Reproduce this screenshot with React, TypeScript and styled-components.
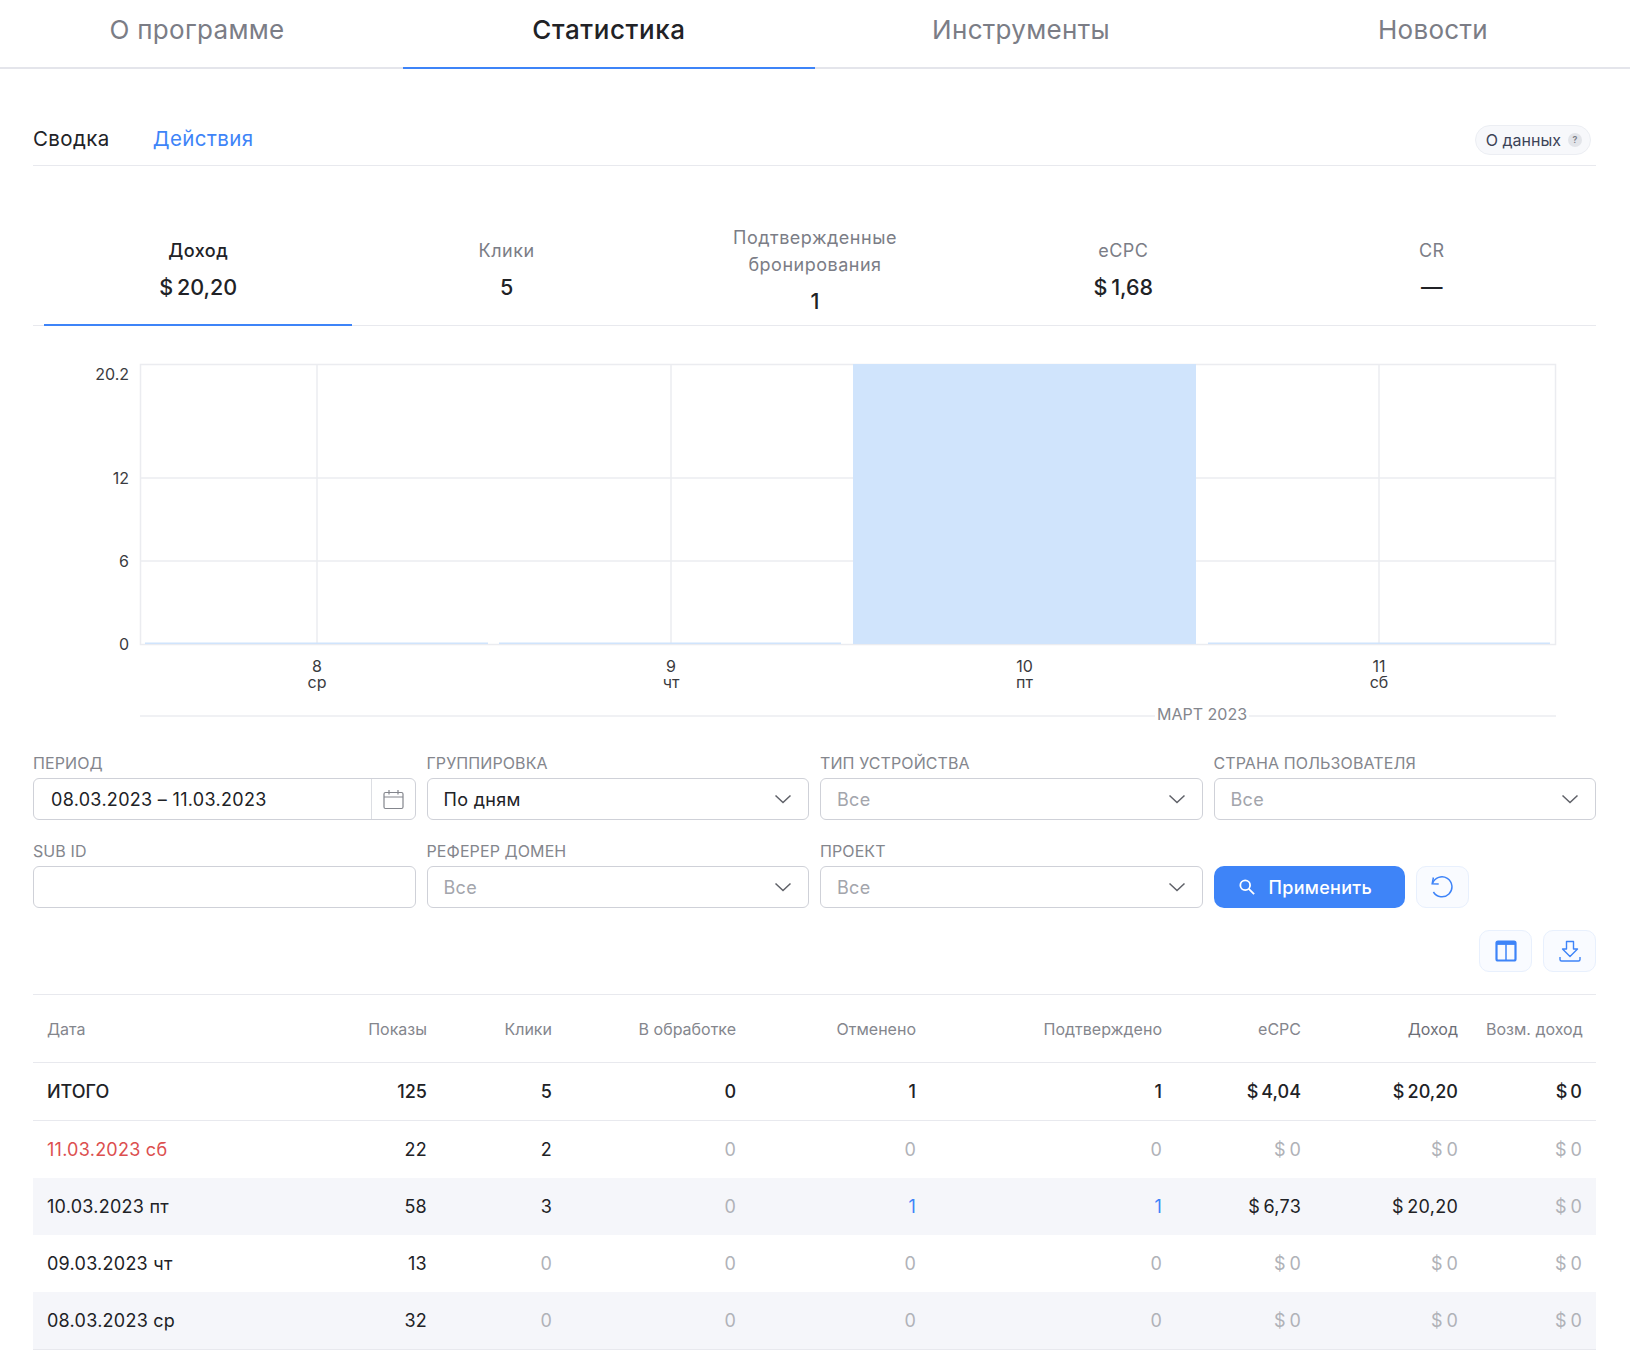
import React from 'react';
import styled, { createGlobalStyle } from 'styled-components';

const BLUE = '#3e84f8';
const LINE = '#e8e9ee';
const GRID = '#ebecf0';

const GlobalStyle = createGlobalStyle`
  html, body {
    margin: 0;
    padding: 0;
    background: #fff;
  }
  body {
    font-family: Inter, "Noto Sans", sans-serif;
    color: #212226;
    overflow-x: hidden;
  }
`;

const Page = styled.div`
  width: 1630px;
  overflow: hidden;
`;

const TabBar = styled.nav`
  display: flex;
  width: 1648px;
  height: 69px;
  margin-left: -9px;
  box-sizing: border-box;
  border-bottom: 2px solid #e4e5eb;
`;

const Tab = styled.a<{ $active?: boolean }>`
  flex: 0 0 412px;
  height: 69px;
  box-sizing: border-box;
  padding-bottom: 8px;
  display: flex;
  align-items: center;
  justify-content: center;
  font-size: 26px;
  letter-spacing: ${(p) => (p.$active ? 0.6 : 0.3)}px;
  font-weight: ${(p) => (p.$active ? 500 : 400)};
  color: ${(p) => (p.$active ? '#212226' : '#7b7d86')};
  border-bottom: 2px solid ${(p) => (p.$active ? BLUE : 'transparent')};
`;

const Content = styled.main`
  padding: 0 34px 0 33px;
`;

const SubNav = styled.div`
  display: flex;
  align-items: center;
  gap: 43px;
  height: 53px;
  margin-top: 44px;
  box-sizing: border-box;
  border-bottom: 1px solid ${LINE};
`;

const SubLink = styled.a<{ $active?: boolean }>`
  margin-bottom: 2px;
  font-size: 20.5px;
  letter-spacing: 0.4px;
  color: ${(p) => (p.$active ? BLUE : '#212226')};
`;

const DataPill = styled.button`
  margin: 2px 5px 0 auto;
  height: 30px;
  box-sizing: border-box;
  padding: 0 8px 0 10px;
  display: flex;
  align-items: center;
  gap: 7px;
  border: 1px solid #eceef3;
  border-radius: 15px;
  background: #f7f8fb;
  font: 400 16px Inter, sans-serif;
  color: #3c4357;
`;

const HelpBadge = styled.span`
  width: 14px;
  height: 14px;
  border-radius: 50%;
  background: #e2e4e9;
  color: #7b7d86;
  font-size: 9px;
  font-weight: 600;
  line-height: 14px;
  text-align: center;
`;

const Metrics = styled.div`
  display: flex;
  height: 113px;
  margin-top: 47px;
  padding: 0 11px;
  box-sizing: border-box;
  border-bottom: 1px solid ${LINE};
`;

const Metric = styled.div<{ $active?: boolean }>`
  flex: 0 0 308.4px;
  height: 113px;
  box-sizing: border-box;
  padding-top: 3px;
  display: flex;
  flex-direction: column;
  justify-content: center;
  align-items: center;
  text-align: center;
  border-bottom: 2px solid ${(p) => (p.$active ? BLUE : 'transparent')};
`;

const MetricLabel = styled.div<{ $active?: boolean }>`
  font-size: 18px;
  line-height: 27px;
  letter-spacing: 0.5px;
  font-weight: ${(p) => (p.$active ? 500 : 400)};
  color: ${(p) => (p.$active ? '#212226' : '#7b7d86')};
`;

const MetricValue = styled.div`
  margin-top: 7px;
  font-size: 21.5px;
  line-height: 32px;
  font-weight: 500;
  color: #212226;
`;

const ChartSvg = styled.svg`
  display: block;
  font-family: Inter, sans-serif;
`;

const FilterGrid = styled.div`
  display: grid;
  grid-template-columns: repeat(4, 1fr);
  column-gap: 11px;
  row-gap: 21px;
  margin-top: 12px;
`;

const Field = styled.label`
  display: flex;
  flex-direction: column;
  min-width: 0;
`;

const FieldLabel = styled.span`
  height: 20px;
  margin-bottom: 5px;
  font-size: 16px;
  line-height: 20px;
  letter-spacing: 0.1px;
  color: #84868d;
`;

const InputBox = styled.div`
  height: 42px;
  box-sizing: border-box;
  display: flex;
  align-items: center;
  border: 1px solid #cfd1d8;
  border-radius: 6px;
  background: #fff;
  font-size: 18px;
  letter-spacing: 0.3px;
`;

const DateText = styled.span`
  flex: 1;
  padding-left: 17px;
  color: #212226;
`;

const CalendarCell = styled.span`
  flex: 0 0 43px;
  height: 100%;
  display: flex;
  align-items: center;
  justify-content: center;
  border-left: 1px solid #dcdee3;
`;

const SelectBox = styled(InputBox)`
  justify-content: space-between;
  padding: 0 16px 0 16px;
`;

const SelectValue = styled.span<{ $placeholder?: boolean }>`
  color: ${(p) => (p.$placeholder ? '#a3a5ac' : '#212226')};
`;

const ActionCell = styled.div`
  display: flex;
  gap: 11px;
  align-self: end;
`;

const ApplyButton = styled.button`
  width: 191px;
  height: 42px;
  display: flex;
  align-items: center;
  gap: 14px;
  padding: 0 0 0 25px;
  border: 0;
  border-radius: 10px;
  background: ${BLUE};
  color: #fff;
  font: 500 18px Inter, sans-serif;
  letter-spacing: 0.3px;
`;

const IconButton = styled.button`
  width: 53px;
  height: 42px;
  padding: 0;
  display: flex;
  align-items: center;
  justify-content: center;
  border: 1px solid #e8f0fd;
  border-radius: 10px;
  background: #f9fbff;
`;

const Toolbar = styled.div`
  display: flex;
  justify-content: flex-end;
  gap: 11px;
  margin-top: 22px;
`;

const Table = styled.table`
  width: 100%;
  margin-top: 22px;
  table-layout: fixed;
  border-collapse: collapse;
  border-top: 1px solid ${LINE};
  border-bottom: 1px solid ${LINE};
`;

const HeadCell = styled.th<{ $dark?: boolean }>`
  height: 68px;
  padding: 0 14px;
  box-sizing: border-box;
  font-size: 16px;
  font-weight: 400;
  text-align: right;
  white-space: nowrap;
  color: ${(p) => (p.$dark ? '#6c6e76' : '#84868d')};
  border-bottom: 1px solid ${LINE};
  &:first-child {
    text-align: left;
  }
`;

const Row = styled.tr<{ $striped?: boolean; $total?: boolean }>`
  height: ${(p) => (p.$total ? 58 : 57.25)}px;
  background: ${(p) => (p.$striped ? '#f5f6fa' : '#fff')};
  border-bottom: ${(p) => (p.$total ? `1px solid ${LINE}` : '0')};
`;

type Tone = 'dark' | 'muted' | 'link' | 'red';

const toneColor: Record<Tone, string> = {
  dark: '#212226',
  muted: '#b0b2b8',
  link: BLUE,
  red: '#dc4f4f',
};

const Cell = styled.td<{ $tone?: Tone; $strong?: boolean }>`
  padding: 0 14px;
  font-size: 18px;
  font-weight: ${(p) => (p.$strong ? 500 : 400)};
  letter-spacing: ${(p) => (p.$strong ? 0 : 0.25)}px;
  text-align: right;
  white-space: nowrap;
  color: ${(p) => toneColor[p.$tone ?? 'dark']};
  &:first-child {
    text-align: left;
  }
`;

const Chevron = () => (
  <svg width="18" height="10" viewBox="0 0 18 10" fill="none">
    <path d="M1.5 1.5 9 8.5l7.500-7" stroke="#5f6168" strokeWidth="1.5" />
  </svg>
);

const CalendarIcon = () => (
  <svg width="21" height="21" viewBox="0 0 21 21" fill="none" stroke="#84868d" strokeWidth="1.2">
    <rect x="1" y="3.500" width="19" height="16" rx="1.500" />
    <path d="M1 8h19M6 1v4.500M15 1v4.500" />
  </svg>
);

const SearchIcon = () => (
  <svg width="16" height="16" viewBox="0 0 18 18" fill="none" stroke="#fff" strokeWidth="2">
    <circle cx="7" cy="7" r="5.500" />
    <path d="m11 11 6 6" />
  </svg>
);

const ResetIcon = () => (
  <svg width="24" height="24" viewBox="0 0 24 24" fill="none" stroke={BLUE} strokeWidth="1.500">
    <path d="M2.500 8.500A10 10 0 1 1 3.400 17" />
    <path d="M3.400 2.500 2.200 8.800l6.500.1" />
  </svg>
);

const ColumnsIcon = () => (
  <svg width="24" height="24" viewBox="0 0 24 24" fill="none" stroke={BLUE}>
    <rect x="2.500" y="2.500" width="19" height="19" rx="1.500" strokeWidth="2.200" />
    <path d="M2.500 4.200h19" strokeWidth="3.400" />
    <path d="M12 4v17" strokeWidth="1.500" />
  </svg>
);

const DownloadIcon = () => (
  <svg width="24" height="24" viewBox="0 0 24 24" fill="none" stroke={BLUE} strokeWidth="1.400">
    <path d="M8.500 2.500h7v7.500h4L12 17.500 4.500 10h4z" strokeLinejoin="round" />
    <path d="M2 18v2.500a1.500 1.500 0 0 0 1.500 1.500h17a1.500 1.500 0 0 0 1.500-1.500V18" />
  </svg>
);

const tabs = ['О программе', 'Статистика', 'Инструменты', 'Новости'];

const metrics = [
  { label: ['Доход'], value: '$\u200920,20', active: true },
  { label: ['Клики'], value: '5' },
  { label: ['Подтвержденные', 'бронирования'], value: '1' },
  { label: ['eCPC'], value: '$\u20091,68' },
  { label: ['CR'], value: '—' },
];

const yTicks = [
  { label: '20.2', y: 48 },
  { label: '12', y: 152 },
  { label: '6', y: 235 },
  { label: '0', y: 318 },
];

const xTicks = [
  { day: '8', week: 'ср', x: 284 },
  { day: '9', week: 'чт', x: 638 },
  { day: '10', week: 'пт', x: 991.500 },
  { day: '11', week: 'сб', x: 1346 },
];

// x, width of each bar in svg coordinates, heights follow the income per day
const bars = [
  { x: 112, width: 343, height: 1.5 },
  { x: 466, width: 342, height: 1.5 },
  { x: 820, width: 343, height: 280 },
  { x: 1175, width: 342, height: 1.5 },
];

const Chart = () => (
  <ChartSvg width="1563" height="415" viewBox="0 0 1563 415">
    <rect x="107.500" y="38.500" width="1415" height="280" fill="#fff" stroke={GRID} strokeWidth="1.500" />
    {[152, 235].map((y) => (
      <line key={y} x1="107" x2="1523" y1={y} y2={y} stroke={GRID} strokeWidth="1.500" />
    ))}
    {xTicks.map((t) => (
      <line key={t.day} x1={t.x} x2={t.x} y1="38" y2="318" stroke={GRID} strokeWidth="1.500" />
    ))}
    {bars.map((b) => (
      <rect key={b.x} x={b.x} y={318 - b.height} width={b.width} height={b.height} fill="#d0e4fc" />
    ))}
    {yTicks.map((t) => (
      <text key={t.label} x="96" y={t.y} dy="6" textAnchor="end" fontSize="16" fill="#3a3b40">
        {t.label}
      </text>
    ))}
    {xTicks.map((t) => (
      <text key={t.day} textAnchor="middle" fontSize="16" fill="#3a3b40">
        <tspan x={t.x} y="346">{t.day}</tspan>
        <tspan x={t.x} y="362">{t.week}</tspan>
      </text>
    ))}
    <line x1="107" x2="1523" y1="390" y2="390" stroke={GRID} strokeWidth="1.500" />
    <rect x="1122" y="380" width="94" height="20" fill="#fff" />
    <text x="1169" y="394" textAnchor="middle" fontSize="16" fill="#84868d">МАРТ 2023</text>
  </ChartSvg>
);

const SelectField = ({ label, value, placeholder }: { label: string; value: string; placeholder?: boolean }) => (
  <Field>
    <FieldLabel>{label}</FieldLabel>
    <SelectBox>
      <SelectValue $placeholder={placeholder}>{value}</SelectValue>
      <Chevron />
    </SelectBox>
  </Field>
);

const columns = ['Дата', 'Показы', 'Клики', 'В обработке', 'Отменено', 'Подтверждено', 'eCPC', 'Доход', 'Возм. доход'];
const columnWidths = [268, 140, 125, 184, 180, 246, 139, 157, 124];
const money = (v: string) => `$\u2009${v}`;

const rows: { date: string; red?: boolean; cells: [string, Tone][] }[] = [
  {
    date: '11.03.2023 сб',
    red: true,
    cells: [['22', 'dark'], ['2', 'dark'], ['0', 'muted'], ['0', 'muted'], ['0', 'muted'], [money('0'), 'muted'], [money('0'), 'muted'], [money('0'), 'muted']],
  },
  {
    date: '10.03.2023 пт',
    cells: [['58', 'dark'], ['3', 'dark'], ['0', 'muted'], ['1', 'link'], ['1', 'link'], [money('6,73'), 'dark'], [money('20,20'), 'dark'], [money('0'), 'muted']],
  },
  {
    date: '09.03.2023 чт',
    cells: [['13', 'dark'], ['0', 'muted'], ['0', 'muted'], ['0', 'muted'], ['0', 'muted'], [money('0'), 'muted'], [money('0'), 'muted'], [money('0'), 'muted']],
  },
  {
    date: '08.03.2023 ср',
    cells: [['32', 'dark'], ['0', 'muted'], ['0', 'muted'], ['0', 'muted'], ['0', 'muted'], [money('0'), 'muted'], [money('0'), 'muted'], [money('0'), 'muted']],
  },
];

const totals = ['125', '5', '0', '1', '1', money('4,04'), money('20,20'), money('0')];

export default function App() {
  return (
    <Page>
      <GlobalStyle />
      <TabBar>
        {tabs.map((t) => (
          <Tab key={t} $active={t === 'Статистика'}>{t}</Tab>
        ))}
      </TabBar>
      <Content>
        <SubNav>
          <SubLink>Сводка</SubLink>
          <SubLink $active>Действия</SubLink>
          <DataPill>
            О данных
            <HelpBadge>?</HelpBadge>
          </DataPill>
        </SubNav>

        <Metrics>
          {metrics.map((m) => (
            <Metric key={m.label[0]} $active={m.active}>
              <MetricLabel $active={m.active}>
                {m.label.map((line) => (
                  <div key={line}>{line}</div>
                ))}
              </MetricLabel>
              <MetricValue>{m.value}</MetricValue>
            </Metric>
          ))}
        </Metrics>

        <Chart />

        <FilterGrid>
          <Field>
            <FieldLabel>ПЕРИОД</FieldLabel>
            <InputBox>
              <DateText>08.03.2023 – 11.03.2023</DateText>
              <CalendarCell>
                <CalendarIcon />
              </CalendarCell>
            </InputBox>
          </Field>
          <SelectField label="ГРУППИРОВКА" value="По дням" />
          <SelectField label="ТИП УСТРОЙСТВА" value="Все" placeholder />
          <SelectField label="СТРАНА ПОЛЬЗОВАТЕЛЯ" value="Все" placeholder />
          <Field>
            <FieldLabel>SUB ID</FieldLabel>
            <InputBox />
          </Field>
          <SelectField label="РЕФЕРЕР ДОМЕН" value="Все" placeholder />
          <SelectField label="ПРОЕКТ" value="Все" placeholder />
          <ActionCell>
            <ApplyButton>
              <SearchIcon />
              Применить
            </ApplyButton>
            <IconButton aria-label="Сбросить">
              <ResetIcon />
            </IconButton>
          </ActionCell>
        </FilterGrid>

        <Toolbar>
          <IconButton aria-label="Колонки">
            <ColumnsIcon />
          </IconButton>
          <IconButton aria-label="Скачать">
            <DownloadIcon />
          </IconButton>
        </Toolbar>

        <Table>
          <colgroup>
            {columnWidths.map((w, i) => (
              <col key={i} width={w} />
            ))}
          </colgroup>
          <thead>
            <tr>
              {columns.map((c) => (
                <HeadCell key={c} $dark={c === 'Доход'}>{c}</HeadCell>
              ))}
            </tr>
          </thead>
          <tbody>
            <Row $total>
              <Cell $strong>ИТОГО</Cell>
              {totals.map((v, i) => (
                <Cell key={i} $strong>{v}</Cell>
              ))}
            </Row>
            {rows.map((r, i) => (
              <Row key={r.date} $striped={i % 2 === 1}>
                <Cell $tone={r.red ? 'red' : 'dark'}>{r.date}</Cell>
                {r.cells.map(([v, tone], j) => (
                  <Cell key={j} $tone={tone}>{v}</Cell>
                ))}
              </Row>
            ))}
          </tbody>
        </Table>
      </Content>
    </Page>
  );
}
